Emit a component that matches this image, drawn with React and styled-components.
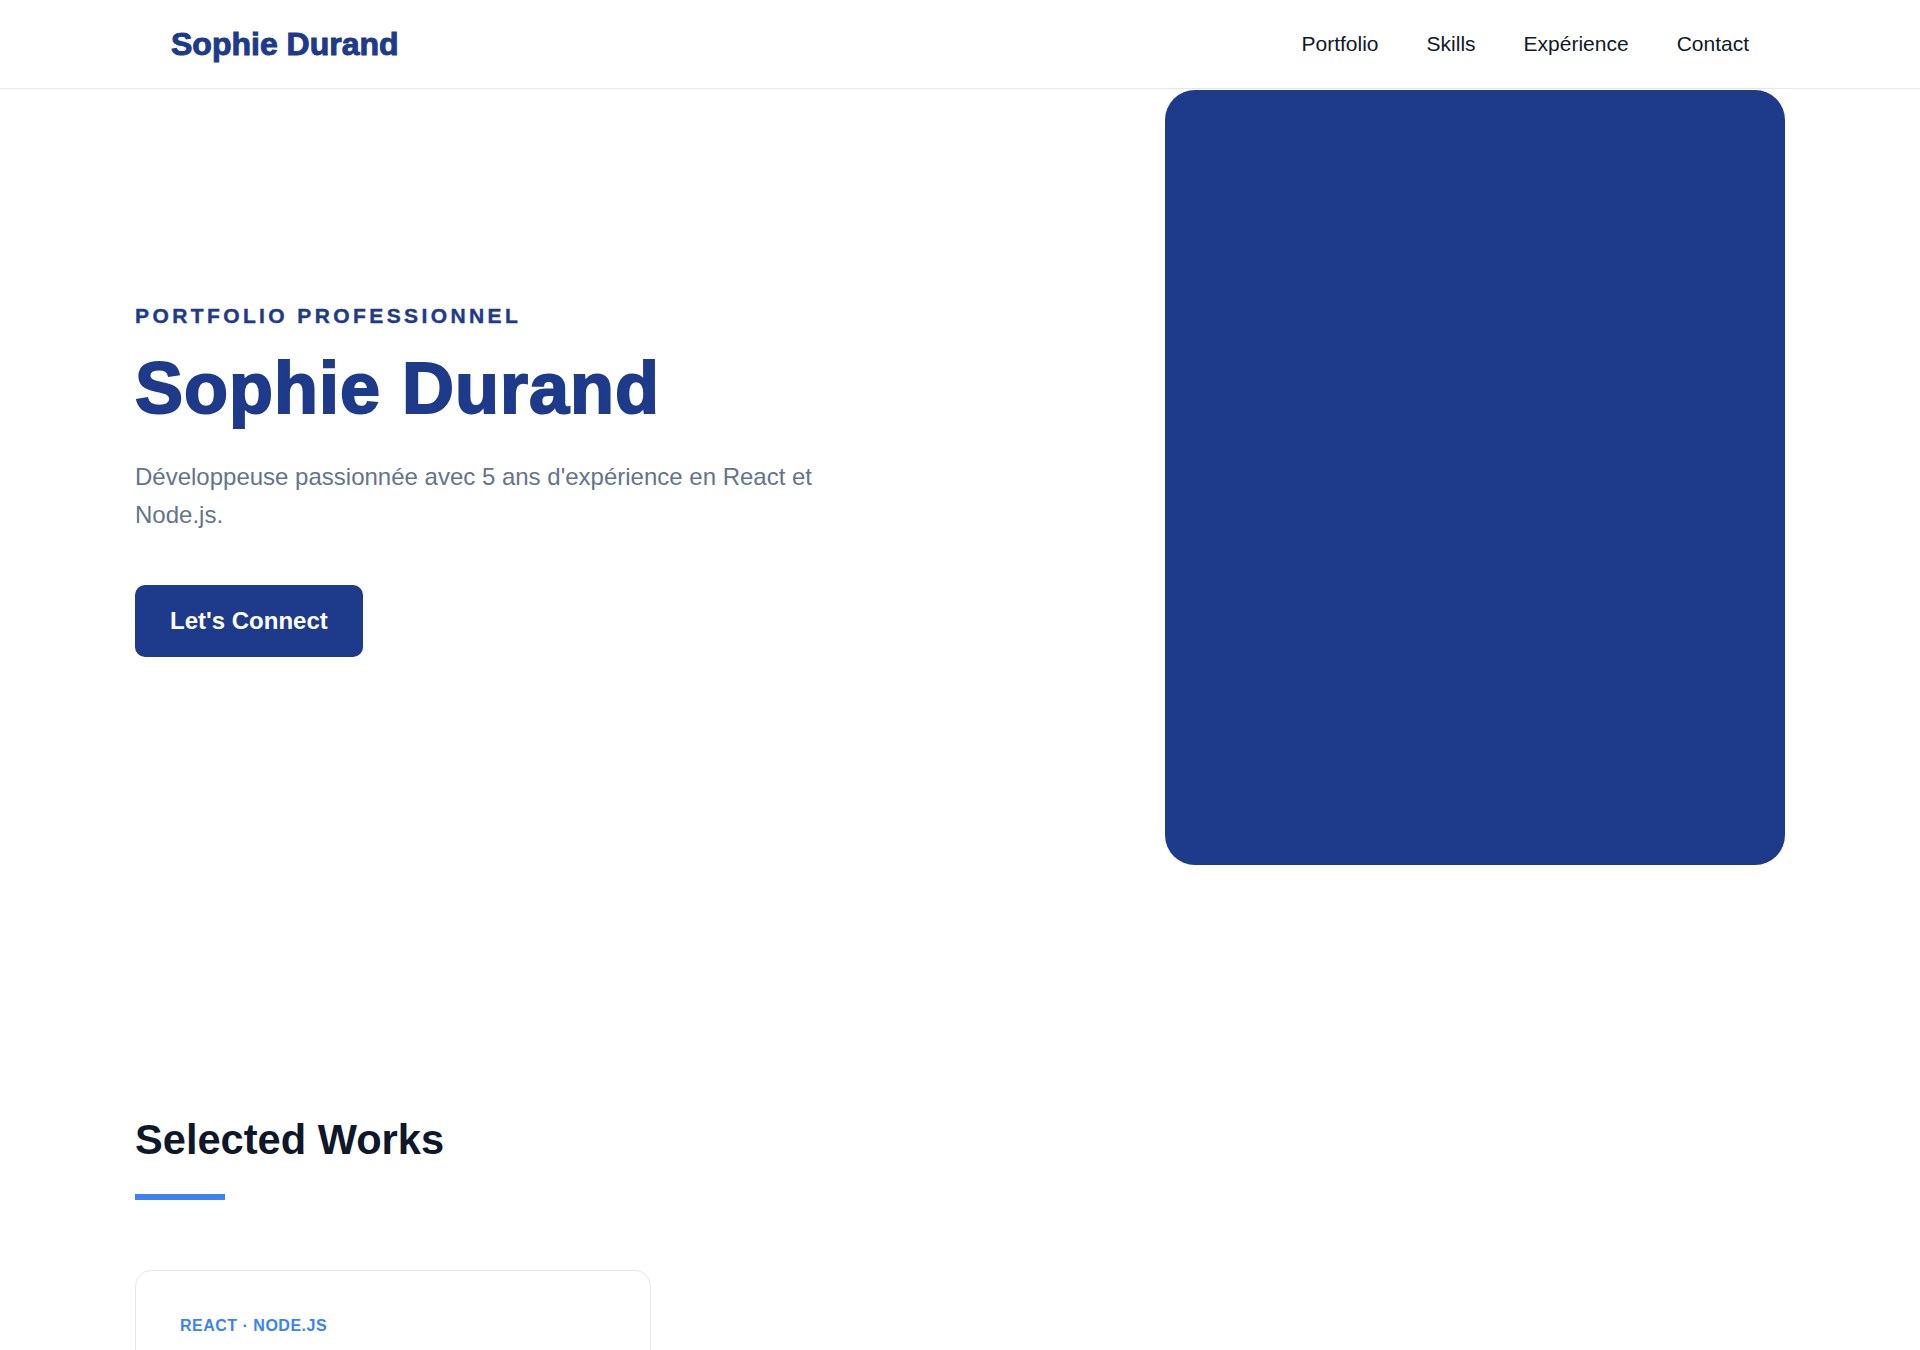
import React from "react";
import styled, { createGlobalStyle } from "styled-components";

const GlobalStyle = createGlobalStyle`
  * {
    box-sizing: border-box;
  }

  body {
    margin: 0;
    background: #ffffff;
    font-family: "Liberation Sans", Arial, sans-serif;
    color: #0f172a;
  }
`;

const works = [
  { id: 1, tags: "React · Node.js" },
];

function App() {
  return (
    <>
      <GlobalStyle />
      <Header>
        <HeaderInner>
          <Logo>Sophie Durand</Logo>
          <Nav>
            <NavLink href="#portfolio">Portfolio</NavLink>
            <NavLink href="#skills">Skills</NavLink>
            <NavLink href="#experience">Expérience</NavLink>
            <NavLink href="#contact">Contact</NavLink>
          </Nav>
        </HeaderInner>
      </Header>

      <Container>
        <Hero>
          <HeroText>
            <Eyebrow>Portfolio professionnel</Eyebrow>
            <Title>Sophie Durand</Title>
            <Lead>
              Développeuse passionnée avec 5 ans d'expérience en React et
              Node.js.
            </Lead>
            <Button>Let's Connect</Button>
          </HeroText>
          <Portrait />
        </Hero>
      </Container>

      <Container>
        <Works id="portfolio">
          <SectionTitle>Selected Works</SectionTitle>
          <Accent />
          <Grid>
            {works.map((work) => (
              <Card key={work.id}>
                <Tags>{work.tags}</Tags>
              </Card>
            ))}
          </Grid>
        </Works>
      </Container>
    </>
  );
}

export default App;

const Container = styled.div`
  max-width: 1650px;
  margin: 0 auto;
`;

const Header = styled.header`
  background: #fff;
  border-bottom: 1px solid #e5e7eb;
`;

const HeaderInner = styled(Container)`
  height: 88px;
  padding: 0 36px;
  display: flex;
  align-items: center;
  justify-content: space-between;
`;

const Logo = styled.div`
  font-size: 32px;
  font-weight: 800;
  color: #1e3a8a;
  -webkit-text-stroke: 1px #1e3a8a;
`;

const Nav = styled.nav`
  display: flex;
  gap: 48px;
`;

const NavLink = styled.a`
  font-size: 21px;
  color: #111827;
  text-decoration: none;
`;

const Hero = styled.section`
  display: flex;
  align-items: center;
  justify-content: space-between;
  padding-top: 1px;
`;

const HeroText = styled.div`
  display: flex;
  flex-direction: column;
  align-items: flex-start;
  max-width: 720px;
  padding-top: 6px;
`;

const Eyebrow = styled.span`
  font-size: 21px;
  font-weight: 700;
  letter-spacing: 3.4px;
  text-transform: uppercase;
  color: #1e3a8a;
  -webkit-text-stroke: 0.4px #1e3a8a;
  margin-bottom: 21px;
`;

const Title = styled.h1`
  margin: 0 0 29.5px;
  font-size: 72px;
  line-height: 1.1;
  font-weight: 900;
  letter-spacing: 1px;
  color: #1e3a8a;
  -webkit-text-stroke: 2px #1e3a8a;
`;

const Lead = styled.p`
  margin: 0 0 50px;
  font-size: 24px;
  line-height: 1.6;
  color: #64748b;
`;

const Button = styled.button`
  height: 72px;
  border: none;
  border-radius: 10px;
  background: #1e3a8a;
  color: #fff;
  font-family: inherit;
  font-size: 24px;
  font-weight: 700;
  padding: 0 35px;
  cursor: pointer;
`;

const Portrait = styled.div`
  width: 620px;
  aspect-ratio: 4 / 5;
  border-radius: 30px;
  background: #1e3a8a;
`;

const Works = styled.section`
  padding-top: 250px;
`;

const SectionTitle = styled.h2`
  margin: 0;
  font-size: 41.6px;
  line-height: 1.2;
  font-weight: 700;
  color: #0f172a;
`;

const Accent = styled.div`
  width: 90px;
  height: 6px;
  background: #3b82f6;
  margin: 29px 0 70px;
`;

const Grid = styled.div`
  display: grid;
  grid-template-columns: repeat(3, 1fr);
  gap: 51px;
`;

const Card = styled.article`
  border: 1px solid #e5e7eb;
  border-radius: 16px;
  padding: 46px 44px;
  min-height: 320px;
`;

const Tags = styled.div`
  font-size: 16px;
  font-weight: 700;
  letter-spacing: 0.5px;
  text-transform: uppercase;
  color: #3b82f6;
`;
